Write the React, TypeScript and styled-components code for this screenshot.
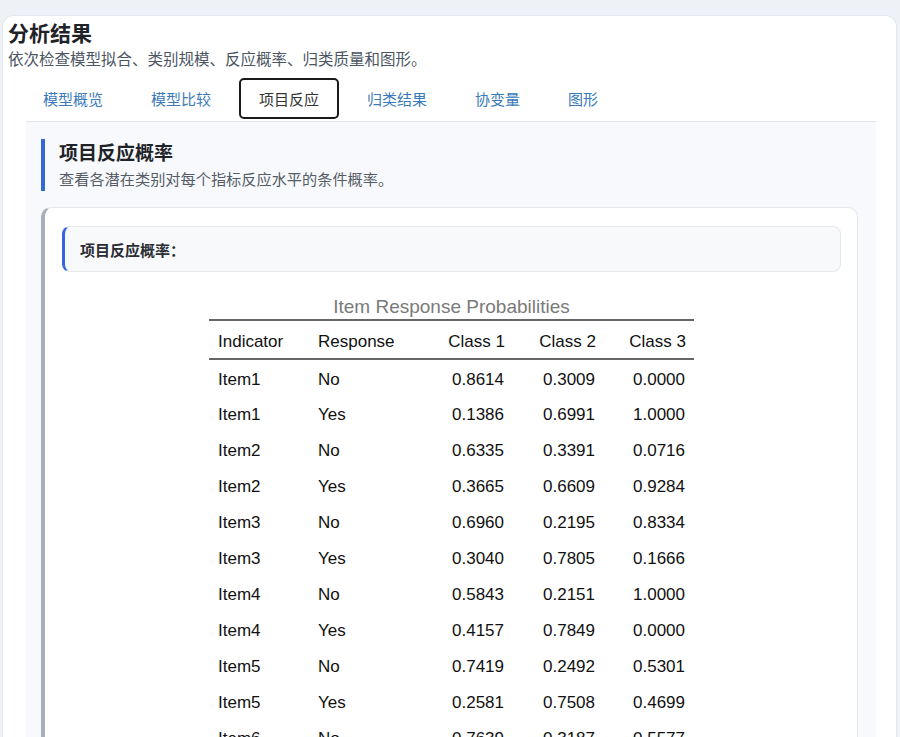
import React, { useState } from "react";
import styled, { createGlobalStyle } from "styled-components";

const GlobalStyle = createGlobalStyle`
  html, body {
    margin: 0;
    padding: 0;
    background: #eef2f7;
    font-family: "Liberation Sans", "Noto Sans CJK SC", sans-serif;
  }
  #root {
    height: 737px;
    overflow: hidden;
  }
`;

const Page = styled.div`
  padding-top: 15px;
  height: 722px;
`;

const Card = styled.div`
  margin: 0 3px 0 2px;
  height: 100%;
  background: #fff;
  border: 1px solid #e3e8ef;
  border-bottom: none;
  border-radius: 12px 12px 0 0;
  padding: 5px 0 0 5px;
  box-sizing: border-box;
`;

const Title = styled.h2`
  margin: 0;
  font-size: 21px;
  line-height: 26px;
  font-weight: 700;
  color: #1f2328;
`;

const Subtitle = styled.p`
  margin: 3px 0 0;
  font-size: 15.5px;
  line-height: 20px;
  color: #4b5563;
`;

const Body = styled.div`
  margin: 0 20px 0 18px;
`;

const TabBar = styled.div`
  display: flex;
  gap: 8px;
  margin: 8px 0 0;
  border-bottom: 1px solid #e2e6eb;
  padding: 0 0 2px;
`;

const Tab = styled.button<{ $active?: boolean; $first?: boolean }>`
  font-family: inherit;
  font-size: 15px;
  height: 41px;
  padding: 0 18px;
  margin-left: ${(p) => (p.$first ? "-3px" : "0")};
  background: #fff;
  cursor: pointer;
  border-radius: 5px;
  color: ${(p) => (p.$active ? "#333" : "#3a7ab8")};
  border: ${(p) => (p.$active ? "2px solid #1a1a1a" : "2px solid transparent")};
`;

const Panel = styled.div`
  background: #f7f9fc;
  padding: 17px 18px 0 15px;
  height: 620px;
`;

const Heading = styled.div`
  border-left: 4px solid #3568d4;
  padding-left: 14px;
  height: 52px;
  display: flex;
  flex-direction: column;
  justify-content: center;
`;

const HeadingTitle = styled.div`
  font-size: 19px;
  font-weight: 700;
  color: #1f2328;
  line-height: 23px;
`;

const HeadingSub = styled.div`
  font-size: 15.2px;
  color: #555c66;
  margin-top: 5px;
  line-height: 19px;
`;

const ResultCard = styled.div`
  margin-top: 16px;
  background: #fff;
  border: 1px solid #e4e7ec;
  border-left: 4px solid #a7afba;
  border-radius: 10px;
  padding: 18px 16px 0 17px;
  height: 600px;
`;

const ResultHeader = styled.div`
  background: #f8f9fb;
  border: 1px solid #e6e8ec;
  border-left: 3px solid #3566de;
  border-radius: 8px;
  height: 44px;
  display: flex;
  align-items: center;
  padding-left: 15px;
  font-size: 15px;
  font-weight: 700;
  color: #2a2d33;
`;

const Table = styled.table`
  margin: 23px auto 0;
  border-collapse: collapse;
  font-family: "Liberation Sans", Arial, sans-serif;
  font-size: 17px;
  color: #111;
`;

const Caption = styled.caption`
  font-size: 19px;
  color: #7a7a7a;
  padding-bottom: 0;
  line-height: 24px;
`;

const Th = styled.th<{ $num?: boolean; $w: number }>`
  font-weight: 400;
  width: ${(p) => p.$w}px;
  text-align: ${(p) => (p.$num ? "right" : "left")};
  padding: 4px 8px 0 9px;
  height: 39px;
  box-sizing: border-box;
  border-top: 2px solid #666;
  border-bottom: 2px solid #666;
`;

const Td = styled.td<{ $num?: boolean }>`
  text-align: ${(p) => (p.$num ? "right" : "left")};
  padding: 4px 9px 0 9px;
  height: 36px;
  box-sizing: border-box;
`;

const tabs = ["模型概览", "模型比较", "项目反应", "归类结果", "协变量", "图形"];

const columns = [
  { label: "Indicator", w: 100 },
  { label: "Response", w: 100 },
  { label: "Class 1", w: 104, num: true },
  { label: "Class 2", w: 91, num: true },
  { label: "Class 3", w: 90, num: true },
];

const rows: [string, string, string, string, string][] = [
  ["Item1", "No", "0.8614", "0.3009", "0.0000"],
  ["Item1", "Yes", "0.1386", "0.6991", "1.0000"],
  ["Item2", "No", "0.6335", "0.3391", "0.0716"],
  ["Item2", "Yes", "0.3665", "0.6609", "0.9284"],
  ["Item3", "No", "0.6960", "0.2195", "0.8334"],
  ["Item3", "Yes", "0.3040", "0.7805", "0.1666"],
  ["Item4", "No", "0.5843", "0.2151", "1.0000"],
  ["Item4", "Yes", "0.4157", "0.7849", "0.0000"],
  ["Item5", "No", "0.7419", "0.2492", "0.5301"],
  ["Item5", "Yes", "0.2581", "0.7508", "0.4699"],
  ["Item6", "No", "0.7639", "0.3187", "0.5577"],
  ["Item6", "Yes", "0.2361", "0.6813", "0.4423"],
];

function App() {
  const [active, setActive] = useState(2);
  return (
    <>
      <GlobalStyle />
      <Page>
        <Card>
          <Title>分析结果</Title>
          <Subtitle>依次检查模型拟合、类别规模、反应概率、归类质量和图形。</Subtitle>
          <Body>
            <TabBar>
              {tabs.map((t, i) => (
                <Tab
                  key={t}
                  $first={i === 0}
                  $active={i === active}
                  onClick={() => setActive(i)}
                >
                  {t}
                </Tab>
              ))}
            </TabBar>
            <Panel>
              <Heading>
                <HeadingTitle>项目反应概率</HeadingTitle>
                <HeadingSub>查看各潜在类别对每个指标反应水平的条件概率。</HeadingSub>
              </Heading>
              <ResultCard>
                <ResultHeader>项目反应概率：</ResultHeader>
                <Table>
                  <Caption>Item Response Probabilities</Caption>
                  <thead>
                    <tr>
                      {columns.map((c) => (
                        <Th key={c.label} $w={c.w} $num={c.num}>
                          {c.label}
                        </Th>
                      ))}
                    </tr>
                  </thead>
                  <tbody>
                    {rows.map((r, i) => (
                      <tr key={i}>
                        {r.map((cell, j) => (
                          <Td key={j} $num={j > 1}>
                            {cell}
                          </Td>
                        ))}
                      </tr>
                    ))}
                  </tbody>
                </Table>
              </ResultCard>
            </Panel>
          </Body>
        </Card>
      </Page>
    </>
  );
}

export default App;
